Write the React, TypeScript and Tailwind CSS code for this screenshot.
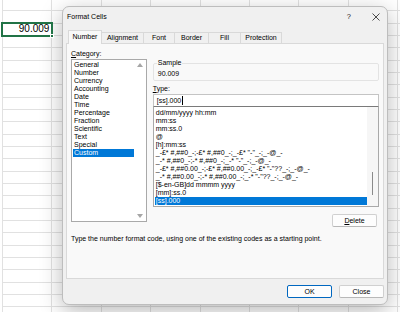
const categories = [
  "General",
  "Number",
  "Currency",
  "Accounting",
  "Date",
  "Time",
  "Percentage",
  "Fraction",
  "Scientific",
  "Text",
  "Special",
  "Custom",
];

const formats = [
  "dd/mm/yyyy hh:mm",
  "mm:ss",
  "mm:ss.0",
  "@",
  "[h]:mm:ss",
  '_-£* #,##0_-;-£* #,##0_-;_-£* "-"_-;_-@_-',
  '_-* #,##0_-;-* #,##0_-;_-* "-"_-;_-@_-',
  '_-£* #,##0.00_-;-£* #,##0.00_-;_-£* "-"??_-;_-@_-',
  '_-* #,##0.00_-;-* #,##0.00_-;_-* "-"??_-;_-@_-',
  "[$-en-GB]dd mmmm yyyy",
  "[mm]:ss.0",
  "[ss].000",
];

const tabs = [
  { label: "Number", w: "w-[34px]" },
  { label: "Alignment", w: "w-[43px]" },
  { label: "Font", w: "w-[32px]" },
  { label: "Border", w: "w-[35px]" },
  { label: "Fill", w: "w-[33px]" },
  { label: "Protection", w: "w-[42px]" },
];

function Sheet() {
  const cells = Array.from({ length: 26 * 9 }, (_, i) => i);
  return (
    <div className="ml-[2px] -mt-[1px] grid w-max grid-cols-[repeat(9,48.4px)] grid-rows-[repeat(26,11.33px)] gap-px bg-[#e1e1e1] pl-px">
      {cells.map((i) =>
        i === 18 ? (
          <div
            key={i}
            className="relative z-10 flex items-center justify-end bg-white pr-[2px] text-[10px] leading-none text-black outline-2 outline-[#217346]"
          >
            90.009
            <span className="absolute -bottom-[3px] -right-[3px] h-[4px] w-[4px] border border-white bg-[#217346]" />
          </div>
        ) : (
          <div key={i} className="bg-white" />
        ),
      )}
    </div>
  );
}

function Btn({ children, primary }: { children: React.ReactNode; primary?: boolean }) {
  return (
    <div
      className={
        "flex h-[13px] w-[45px] items-center justify-center rounded-[2px] border bg-[#fdfdfd] leading-none " +
        (primary ? "border-[#0067c0]" : "border-[#d0d0d0] border-b-[#b8b8b8]")
      }
    >
      {children}
    </div>
  );
}

function Dialog() {
  return (
    <div className="absolute left-[62px] top-[6px] flex h-[299px] w-[326px] flex-col rounded-[7px] border border-[#bdbdbd] bg-[#f0f0f0] text-[7px] leading-[8px] text-black shadow-[0_6px_22px_rgba(0,0,0,0.28)]">
      {/* title bar */}
      <div className="flex h-[20px] items-center pl-[4px]">
        <span>Format Cells</span>
        <span className="ml-auto mr-[21px] text-[7.5px] text-[#222]">?</span>
        <svg width="8" height="8" viewBox="0 0 8 8" className="mr-[7px]">
          <path d="M0.5 0.5L7.5 7.5M7.5 0.5L0.5 7.5" stroke="#222" strokeWidth="0.8" />
        </svg>
      </div>

      {/* tabs */}
      <div className="relative z-10 mt-[3px] flex items-end pl-[5px]">
        {tabs.map((t, i) =>
          i === 0 ? (
            <div
              key={t.label}
              className={`${t.w} flex h-[14px] items-center justify-center border border-b-0 border-[#d9d9d9] bg-[#f9f9f9] pb-[1px]`}
            >
              {t.label}
            </div>
          ) : (
            <div
              key={t.label}
              className={`${t.w} -ml-px flex h-[12px] items-center justify-center border border-[#d9d9d9] bg-[#f0f0f0]`}
            >
              {t.label}
            </div>
          ),
        )}
      </div>

      {/* panel */}
      <div className="mx-[3px] -mt-px flex h-[236px] flex-col border border-[#d9d9d9] bg-[#f9f9f9] px-[4px] pt-[5px]">
        <div className="flex gap-[6px]">
          {/* category */}
          <div className="flex w-[76px] flex-col">
            <span className="mt-[1px]">
              <u>C</u>ategory:
            </span>
            <div className="mt-[1px] flex h-[163px] border border-[#a9a9a9] bg-white">
              <div className="flex flex-1 flex-col pl-px pt-[1px]">
                {categories.map((c) => (
                  <div
                    key={c}
                    className={"h-[8px] pl-[1px] " + (c === "Custom" ? "bg-[#0078d7] text-white" : "")}
                  >
                    {c}
                  </div>
                ))}
              </div>
              <div className="flex w-[12px] flex-col items-center justify-between py-[3px]">
                <svg width="6" height="4" viewBox="0 0 6 4">
                  <path d="M3 0L6 4H0Z" fill="#a6a6a6" />
                </svg>
                <svg width="6" height="4" viewBox="0 0 6 4">
                  <path d="M0 0H6L3 4Z" fill="#a6a6a6" />
                </svg>
              </div>
            </div>
          </div>

          {/* right column */}
          <div className="flex w-[227px] flex-col">
            <fieldset className="mt-[10px] h-[22px] rounded-[2px] border border-[#e3e3e3] px-[3px]">
              <legend className="px-[1px] text-[7px]">Sample</legend>
              <div className="pl-[1px] pt-[3px]">90.009</div>
            </fieldset>
            <span className="mt-[4px]">
              <u>T</u>ype:
            </span>
            <div className="mt-[1px] flex h-[13px] items-center border border-[#c4c4c4] border-b-[#7a7a7a] bg-white pl-[3px]">
              [ss].000
              <span className="ml-px h-[9px] w-px bg-black" />
            </div>
            <div className="flex h-[100px] border border-t-0 border-[#a9a9a9] bg-white">
              <div className="flex flex-1 flex-col overflow-hidden whitespace-nowrap pl-px pt-[2px]">
                {formats.map((f) => (
                  <div
                    key={f}
                    className={"h-[8px] shrink-0 pl-[1px] " + (f === "[ss].000" ? "bg-[#0078d7] text-white" : "")}
                  >
                    {f}
                  </div>
                ))}
              </div>
              <div className="flex w-[11px] flex-col items-center bg-[#f6f6f6] pt-[65px]">
                <div className="h-[23px] w-px bg-[#8a8a8a]" />
              </div>
            </div>
            <div className="mr-[2px] mt-[7px] flex justify-end">
              <Btn>
                <u>D</u>elete
              </Btn>
            </div>
          </div>
        </div>
        <p className="mt-[8px] whitespace-nowrap">
          Type the number format code, using one of the existing codes as a starting point.
        </p>
      </div>

      {/* buttons */}
      <div className="mt-[6px] flex justify-end gap-[7px] pr-[3px]">
        <Btn primary>OK</Btn>
        <Btn>Close</Btn>
      </div>
    </div>
  );
}

export default function App() {
  return (
    <div className="relative h-[312px] w-[400px] overflow-hidden bg-white font-['Liberation_Sans',Arial,sans-serif]">
      <Sheet />
      <Dialog />
    </div>
  );
}
